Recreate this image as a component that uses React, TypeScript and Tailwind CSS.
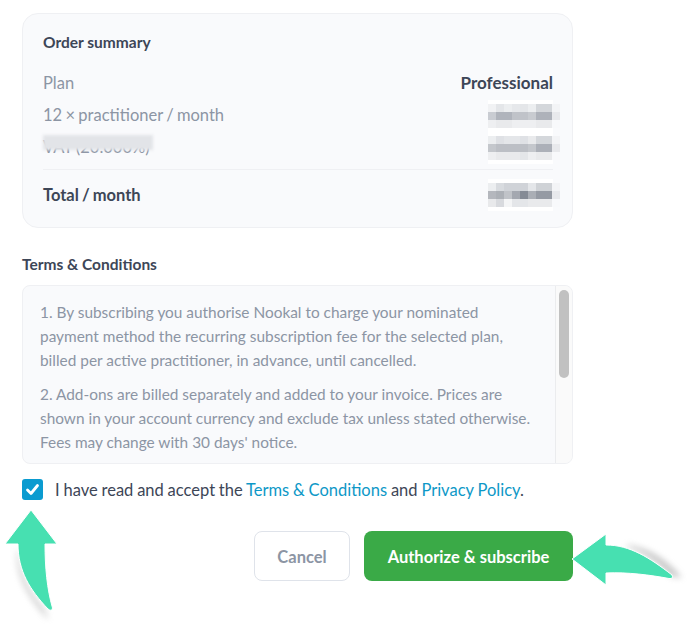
const MOSAIC_TOP = [
  [0, '#f1f2f4', '#e4e6e9', '#eceef0', '#e6e8eb', '#e4e6e9', '#eceef0', '#d4d7db', '#d4d7db', '#f3f4f6'],
  [1, '#c9ccd2', '#b0b4bc', '#b0b4bc', '#c0c3c9', '#c0c3c9', '#c8cbd0', '#aeb2ba', '#aeb2ba', '#e8e9ec'],
  [2, '#eeeff1', '#e9eaec', '#e9eaec', '#eeeff1', '#eeeff1', '#eeeff1', '#e9eaec', '#e9eaec', '#f8f9fb'],
];
const MOSAIC_MID = [
  [0, '#eceef0', '#dfe1e5', '#e4e6e9', '#e4e6e9', '#dfe1e5', '#e9eaec', '#d4d7db', '#d4d7db', '#f3f4f6'],
  [1, '#c4c7cc', '#bcbfc5', '#bcbfc5', '#bcbfc5', '#bcbfc5', '#c4c7cc', '#acb0b8', '#acb0b8', '#e8e9ec'],
  [2, '#eeeff1', '#e9eaec', '#e9eaec', '#e9eaec', '#e4e6e9', '#eeeff1', '#e9eaec', '#e9eaec', '#f8f9fb'],
];
const MOSAIC_TOTAL = [
  [0, '#eceef0', '#d8dbdf', '#d0d3d8', '#d0d3d8', '#d0d3d8', '#e4e6e9', '#cfd2d6', '#cfd2d6', '#f3f4f6'],
  [1, '#b4b7bd', '#acb0b6', '#c0c3c8', '#a4a8b0', '#858b95', '#aaaeb5', '#959aa3', '#959aa3', '#e8e9ec'],
  [2, '#e8e9eb', '#d8dade', '#f4f5f6', '#e4e6e9', '#e4e6e9', '#e9eaec', '#e9eaec', '#e9eaec', '#f8f9fb'],
];

function Mosaic({ rows }: { rows: (string | number)[][] }) {
  return (
    <svg width="72" height="32" viewBox="0 0 72 32" className="block" aria-hidden="true">
      <rect x="0" y="0" width="65" height="32" fill="#ffffff" />
      {rows.map((row) =>
        row.slice(1).map((color, i) => (
          <rect
            key={`${row[0]}-${i}`}
            x={i * 8}
            y={4 + Number(row[0]) * 8}
            width="8"
            height="8"
            fill={String(color)}
          />
        )),
      )}
    </svg>
  );
}

function SummaryRow({ label, rows }: { label: string; rows: (string | number)[][] }) {
  return (
    <div className="flex h-8 items-center justify-between">
      <span>{label}</span>
      <div className="-mr-[7px] mt-[1px]">
        <Mosaic rows={rows} />
      </div>
    </div>
  );
}

function UpArrow() {
  return (
    <svg
      className="absolute left-0 top-[505px]"
      width="70"
      height="123"
      viewBox="0 0 70 123"
      aria-hidden="true"
    >
      <defs>
        <filter id="up-shadow" x="-50%" y="-20%" width="200%" height="140%">
          <feGaussianBlur stdDeviation="3" />
        </filter>
      </defs>
      <path d="M17 45 C16 72 28 92 49 115 L44 104 C30 88 20 70 18 45 Z" fill="#8a8a8a" opacity="0.5" filter="url(#up-shadow)" />
      <path
        d="M31 5 L57 39 L45 39 C45 62 47 84 52.5 103 Q52 107 48 104 C30 85 18 66 18 39 L5 39 Z"
        fill="#47e0b1"
        stroke="#ffffff"
        strokeWidth="1"
        strokeLinejoin="round"
      />
    </svg>
  );
}

function RightArrow() {
  return (
    <svg
      className="absolute left-[565px] top-[528px]"
      width="124"
      height="64"
      viewBox="0 0 124 64"
      aria-hidden="true"
    >
      <defs>
        <filter id="right-shadow" x="-20%" y="-50%" width="140%" height="200%">
          <feGaussianBlur stdDeviation="3" />
        </filter>
      </defs>
      <path d="M62 17 C85 20 102 32 117 50 L106 48 C92 34 78 24 62 19 Z" fill="#8a8a8a" opacity="0.5" filter="url(#right-shadow)" />
      <path
        d="M7 31 L41 6 L41 17 C65 17 85 30 107 47 Q109 51 104 50.5 C85 47 63 44 41 45 L41 57 Z"
        fill="#47e0b1"
        stroke="#ffffff"
        strokeWidth="1"
        strokeLinejoin="round"
      />
    </svg>
  );
}

export default function App() {
  return (
    <div className="relative h-[628px] w-[689px] overflow-hidden bg-white font-['Lato','Liberation_Sans',sans-serif] text-[#3d4657]">
      <div className="w-[551px] ml-[22px] pt-[13px]">
        <section className="h-[215px] rounded-2xl border border-[#eff0f3] bg-[#f9fafc] pl-5 pr-[19px] pt-[19px]">
          <h2 className="text-[15.5px] font-bold leading-[18px]">Order summary</h2>
          <div className="mt-[16px] text-[16.5px] text-[#8c95a4] [word-spacing:-0.9px]">
            <div className="flex h-8 items-center justify-between">
              <span>Plan</span>
              <span className="text-[17px] font-bold text-[#3d4657]">Professional</span>
            </div>
            <SummaryRow label="12 × practitioner / month" rows={MOSAIC_TOP} />
            <div className="relative">
              <SummaryRow label="VAT (20.000%)" rows={MOSAIC_MID} />
              <div className="absolute left-0 top-[4px] h-[15px] w-[110px] bg-[#e2e4e8] blur-[1.5px]" />
            </div>
            <div className="mt-[6px] flex h-[50px] items-center justify-between border-t border-[#eff0f3] pt-[1px]">
              <span className="font-bold text-[#3d4657]">Total / month</span>
              <div className="-mr-[7px]">
                <Mosaic rows={MOSAIC_TOTAL} />
              </div>
            </div>
          </div>
        </section>

        <h3 className="mt-[27px] text-[15.5px] font-bold leading-[18px]">Terms &amp; Conditions</h3>

        <div className="mt-[12px] flex h-[179px] overflow-hidden rounded-lg border border-[#eff0f3] bg-[#f9fafc]">
          <div className="flex-1 whitespace-nowrap pl-[17px] pt-[14px] text-[15.4px] leading-6 text-[#8c95a4]">
            <p>
              1. By subscribing you authorise Nookal to charge your nominated
              <br />
              payment method the recurring subscription fee for the selected plan,
              <br />
              billed per active practitioner, in advance, until cancelled.
            </p>
            <p className="mt-[10px]">
              2. Add-ons are billed separately and added to your invoice. Prices are
              <br />
              shown in your account currency and exclude tax unless stated otherwise.
              <br />
              Fees may change with 30 days' notice.
            </p>
          </div>
          <div className="w-[17px] shrink-0 border-l border-[#ebecee] bg-[#fafafa] px-[3px] pt-[4px]">
            <div className="h-[88px] rounded-full bg-[#c1c1c1]" />
          </div>
        </div>

        <div className="mt-[15px] flex items-center">
          <span className="flex h-[21px] w-[21px] items-center justify-center rounded-[3px] bg-[#0a9bd0]">
            <svg width="15" height="15" viewBox="0 0 15 15" aria-hidden="true">
              <path
                d="M2.5 8 L6 11.5 L12.5 3.5"
                fill="none"
                stroke="#ffffff"
                strokeWidth="2.8"
                strokeLinecap="round"
                strokeLinejoin="round"
              />
            </svg>
          </span>
          <p className="ml-[12px] text-[16.5px] leading-5 [word-spacing:-0.4px]">
            I have read and accept the <span className="text-[#0d98c7]">Terms &amp; Conditions</span>{' '}
            and <span className="text-[#0d98c7]">Privacy Policy</span>.
          </p>
        </div>

        <div className="mt-[31px] flex justify-end gap-[14px]">
          <button className="h-[50px] w-[96px] rounded-lg border border-[#dfe3ea] bg-white pt-[2px] text-[16.5px] font-bold text-[#8c95a4]">
            Cancel
          </button>
          <button className="h-[50px] w-[209px] rounded-lg bg-[#3aaa47] pt-[2px] text-[16.5px] font-bold text-white">
            Authorize &amp; subscribe
          </button>
        </div>
      </div>

      <UpArrow />
      <RightArrow />
    </div>
  );
}
